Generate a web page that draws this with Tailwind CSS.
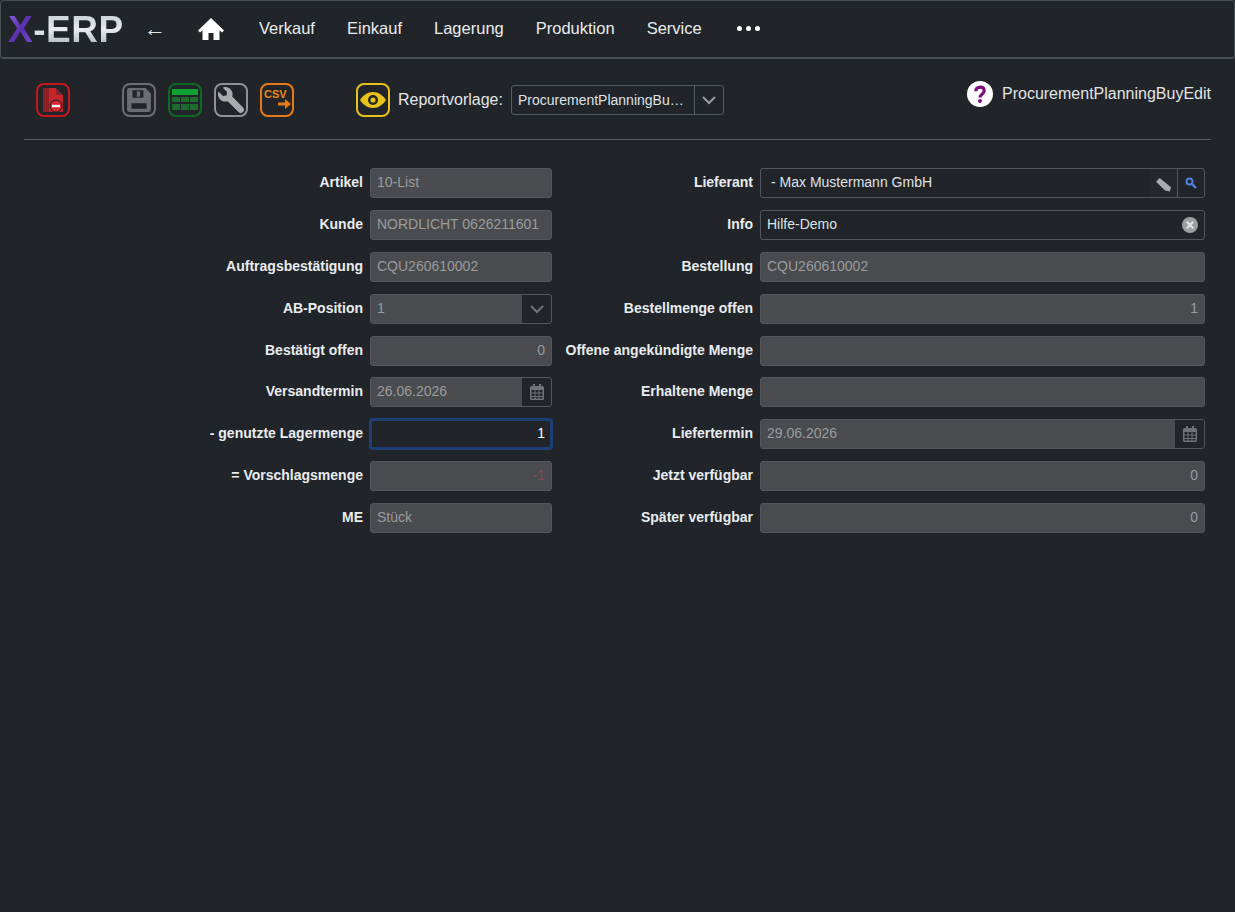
<!DOCTYPE html>
<html lang="de">
<head>
  <meta charset="UTF-8">
  <title>ProcurementPlanningBuyEdit</title>
  <script src="https://cdn.jsdelivr.net/npm/@tailwindcss/browser@4"></script>
</head>
<body class="h-[912px] overflow-hidden bg-[#212529] font-['Liberation_Sans',Arial,sans-serif] text-[14px] text-[#dee2e6]">
  <!-- Navigation -->
  <nav class="flex h-[59px] items-center rounded-[4px] border border-b-2 border-[#4a4e55] pl-[7px]">
    <span class="flex w-[116px] text-[37px] font-bold leading-none tracking-[0.5px]">
      <span class="bg-gradient-to-br from-[#8a63d8] via-[#5a2fb0] to-[#7a4fd0] bg-clip-text text-transparent">X</span>
      <span class="bg-gradient-to-b from-[#c4cbd1] via-[#e8ebee] to-[#a9b1b8] bg-clip-text text-transparent">-ERP</span>
    </span>
    <span class="ml-[20px] w-[20px] text-[22px] leading-none text-[#e6e6e6]">←</span>
    <svg class="ml-[34px]" width="26" height="22" viewBox="0 0 26 22" fill="#fff"><path d="M13 0 26 12.500 24 14.500 21.500 12.300V22H15.500V15H10.500V22H4.500V12.300L2 14.500 0 12.500Z"/></svg>
    <div class="ml-[19px] -mt-[2px] flex items-center text-[16.5px] text-[#e9ecef]">
      <a class="px-4">Verkauf</a>
      <a class="px-4">Einkauf</a>
      <a class="px-4">Lagerung</a>
      <a class="px-4">Produktion</a>
      <a class="px-4">Service</a>
      <span class="ml-[19px] flex gap-[4px]">
        <i class="size-[5px] rounded-full bg-white"></i><i class="size-[5px] rounded-full bg-white"></i><i class="size-[5px] rounded-full bg-white"></i>
      </span>
    </div>
  </nav>

  <!-- Toolbar -->
  <div class="mx-[24px] flex h-[81px] items-start border-b border-[#5a5d62] pt-[24px]">
    <div class="ml-[12px] flex size-[34px] items-center justify-center rounded-lg border-2 border-[#c8161d]">
      <svg width="22" height="25" viewBox="0 0 22 25"><path fill="#8e2025" d="M1 0H7V24H1Z"/><path fill="#c8242b" d="M7 0H14L21 7V24H7Z"/><path fill="#212529" d="M14 0V7H21Z" opacity=".4"/><circle cx="14" cy="18" r="6.500" fill="#212529"/><circle cx="14" cy="18" r="5.500" fill="#d8262d"/><rect x="10" y="16.800" width="8" height="2.400" fill="#fff"/></svg>
    </div>
    <div class="ml-[52px] flex size-[34px] items-center justify-center rounded-lg border-2 border-[#6b6d70]">
      <svg width="26" height="26" viewBox="0 0 24 24"><path fill="#6b6d70" d="M1 3a2 2 0 0 1 2-2h15l5 5v15a2 2 0 0 1-2 2H3a2 2 0 0 1-2-2Z"/><path fill="#212529" d="M6 3h10v7H6ZM5 15h14v5H5Z"/><path fill="#6b6d70" d="M10 4h3v5h-3Z"/></svg>
    </div>
    <div class="ml-[12px] flex size-[34px] items-center justify-center rounded-lg border-2 border-[#0f6b24]">
      <svg width="26" height="24" viewBox="0 0 26 24"><path fill="#12a22f" d="M0 1H26V7H0Z"/><path fill="#1e6b30" d="M0 9H8V14H0ZM9 9H17V14H9ZM18 9H26V14H18ZM0 16H8V22H0ZM9 16H17V22H9ZM18 16H26V22H18Z"/></svg>
    </div>
    <div class="ml-[12px] flex size-[34px] items-center justify-center rounded-lg border-2 border-[#8f9295]">
      <svg width="26" height="26" viewBox="0 0 512 512"><path fill="#a9abad" transform="matrix(-1 0 0 1 512 0)" d="M507.730 109.100c-2.240-9.030-13.540-12.090-20.120-5.510l-74.360 74.360-67.880-11.310-11.310-67.880 74.360-74.360c6.620-6.620 3.430-17.900-5.660-20.160-47.380-11.740-99.550.91-136.580 37.930-39.640 39.640-50.550 97.100-34.050 147.200L18.740 402.760c-24.990 24.990-24.990 65.510 0 90.500 24.990 24.990 65.510 24.990 90.500 0l213.210-213.210c50.120 16.710 107.470 5.680 147.370-34.220 37.070-37.070 49.700-89.320 37.910-136.730z"/></svg>
    </div>
    <div class="ml-[12px] relative size-[34px] rounded-lg border-2 border-[#e8791a]">
      <span class="absolute left-[2px] top-[4px] text-[11px] font-bold leading-none text-[#e8891a]">CSV</span>
      <svg class="absolute left-[16px] top-[14px]" width="13" height="10" viewBox="0 0 13 10"><path fill="#e8791a" d="M0 3.500H7V0L13 5 7 10V6.500H0Z"/></svg>
    </div>
    <div class="ml-[62px] flex size-[34px] items-center justify-center rounded-lg border-2 border-[#e8c21a]">
      <svg width="26" height="16" viewBox="0 0 26 16"><path fill="#e8c21a" d="M13 0C7.500 0 3 3.500 0 8c3 4.500 7.500 8 13 8s10-3.500 13-8c-3-4.500-7.500-8-13-8Z"/><circle cx="13" cy="8" r="5" fill="#212529"/><circle cx="13" cy="8" r="2.600" fill="#e8c21a"/></svg>
    </div>
    <label class="ml-[8px] mt-[7px] text-[16px] leading-[20px] text-[#e2e4e6]">Reportvorlage:</label>
    <div class="ml-[8px] mt-[2px] flex h-[30px] w-[213px] items-center rounded-[3px] border border-[#565b62]">
      <span class="w-[182px] whitespace-nowrap pl-[6px] text-[#dee2e6]">ProcurementPlanningBu…</span>
      <span class="flex h-full flex-1 items-center justify-center border-l border-[#565b62]">
        <svg width="16" height="10" viewBox="0 0 16 10" fill="none" stroke="#9a9da0" stroke-width="2"><path d="M2 2 8 8 14 2"/></svg>
      </span>
    </div>
    <div class="ml-auto flex items-center">
      <svg width="26" height="26" viewBox="0 0 26 26" class="-mt-[2px]"><circle cx="13" cy="13" r="13" fill="#fff"/><path fill="none" stroke="#7b0f7e" stroke-width="3.200" d="M8.800 10.200c0-2.500 1.800-4.100 4.300-4.100s4.100 1.500 4.100 3.700c0 3.500-4.200 3.400-4.200 6.600"/><circle cx="13" cy="20" r="2" fill="#7b0f7e"/></svg>
      <span class="ml-[9px] -mt-[2px] text-[16px] text-[#e2e4e6]">ProcurementPlanningBuyEdit</span>
    </div>
  </div>

  <!-- Form -->
  <form class="ml-[24px] mt-[28px] grid w-[1181px] grid-cols-[339px_182px_194px_445px] gap-x-[7px] gap-y-[11.9px] [&>input]:pb-[2px] [&>label]:text-right [&>label]:font-bold [&>label]:leading-[28px] [&>label]:text-[#e9ecef]">
    <label>Artikel</label>
    <input disabled value="10-List" class="h-[30px] rounded-[3px] border border-[#53565a] bg-[#494b4e] px-[6px] text-[#9a9c9e]">
    <label>Lieferant</label>
    <div class="flex h-[30px] items-center rounded-[3px] border border-[#53575d]">
      <span class="flex-1 pb-[1px] pl-[10px]">- Max Mustermann GmbH</span>
      <span class="flex h-full w-[27px] items-center justify-center bg-[#24282d]">
        <svg class="mt-[2px]" width="15" height="15" viewBox="0 0 14 14"><path fill="#a9abad" d="M3.500 1 14 9.500 13 13.500 8.500 12.500 0 4.500Z"/></svg>
      </span>
      <span class="flex h-full w-[27px] items-center justify-center border-l border-[#53575d]">
        <svg width="12" height="12" viewBox="0 0 12 12" fill="none" stroke="#4f7fe0"><circle cx="4.500" cy="4.500" r="3" stroke-width="2"/><path stroke-width="2.400" d="M7 7l4 4"/></svg>
      </span>
    </div>

    <label>Kunde</label>
    <input disabled value="NORDLICHT 0626211601" class="h-[30px] rounded-[3px] border border-[#53565a] bg-[#494b4e] px-[6px] text-[#9a9c9e]">
    <label>Info</label>
    <div class="flex h-[30px] items-center rounded-[3px] border border-[#53575d] pl-[6px] pr-[6px]">
      <span class="flex-1 pb-[1px]">Hilfe-Demo</span>
      <svg width="16" height="16" viewBox="0 0 16 16"><circle cx="8" cy="8" r="8" fill="#9c9ea0"/><path stroke="#e3e4e5" stroke-width="2" d="M4.800 4.800l6.400 6.400M11.200 4.800l-6.400 6.400"/></svg>
    </div>

    <label>Auftragsbestätigung</label>
    <input disabled value="CQU260610002" class="h-[30px] rounded-[3px] border border-[#53565a] bg-[#494b4e] px-[6px] text-[#9a9c9e]">
    <label>Bestellung</label>
    <input disabled value="CQU260610002" class="h-[30px] rounded-[3px] border border-[#53565a] bg-[#494b4e] px-[6px] text-[#9a9c9e]">

    <label>AB-Position</label>
    <div class="flex h-[30px] items-center rounded-[3px] border border-[#53565a]">
      <span class="flex h-full flex-1 items-center bg-[#494b4e] px-[6px] pb-[1px] text-[#9a9c9e]">1</span>
      <span class="flex h-full w-[29px] items-center justify-center">
        <svg width="16" height="10" viewBox="0 0 16 10" fill="none" stroke="#6f7276" stroke-width="2"><path d="M2 2 8 8 14 2"/></svg>
      </span>
    </div>
    <label>Bestellmenge offen</label>
    <input disabled value="1" class="h-[30px] rounded-[3px] border border-[#53565a] bg-[#494b4e] px-[6px] text-right text-[#9a9c9e]">

    <label>Bestätigt offen</label>
    <input disabled value="0" class="h-[30px] rounded-[3px] border border-[#53565a] bg-[#494b4e] px-[6px] text-right text-[#9a9c9e]">
    <label>Offene angekündigte Menge</label>
    <input disabled class="h-[30px] rounded-[3px] border border-[#53565a] bg-[#494b4e] px-[6px]">

    <label>Versandtermin</label>
    <div class="flex h-[30px] items-center rounded-[3px] border border-[#53565a]">
      <span class="flex h-full flex-1 items-center bg-[#494b4e] px-[6px] pb-[1px] text-[#9a9c9e]">26.06.2026</span>
      <span class="flex h-full w-[29px] items-center justify-center">
        <svg width="14" height="16" viewBox="0 0 14 16"><path fill="#6f7276" d="M3 0h2v2h4V0h2v2h1.500A1.500 1.500 0 0 1 14 3.500v11a1.500 1.500 0 0 1-1.500 1.500h-11A1.500 1.500 0 0 1 0 14.500v-11A1.500 1.500 0 0 1 1.500 2H3Z"/><path fill="#212529" d="M1.500 6h3v2.500h-3ZM5.500 6h3v2.500h-3ZM9.500 6h3v2.500h-3ZM1.500 9.500h3V12h-3ZM5.500 9.500h3V12h-3ZM9.500 9.500h3V12h-3ZM1.500 13h3v1.500h-3ZM5.500 13h3v1.500h-3ZM9.500 13h3v1.500h-3Z"/></svg>
      </span>
    </div>
    <label>Erhaltene Menge</label>
    <input disabled class="h-[30px] rounded-[3px] border border-[#53565a] bg-[#494b4e] px-[6px]">

    <label>- genutzte Lagermenge</label>
    <input value="1" class="h-[30px] rounded-[3px] border-2 border-[#1d3f75] bg-[#212529] px-[5px] text-right text-white outline-none ring-1 ring-[#1d3f75]">
    <label>Liefertermin</label>
    <div class="flex h-[30px] items-center rounded-[3px] border border-[#53565a]">
      <span class="flex h-full flex-1 items-center bg-[#494b4e] px-[6px] pb-[1px] text-[#9a9c9e]">29.06.2026</span>
      <span class="flex h-full w-[29px] items-center justify-center">
        <svg width="14" height="16" viewBox="0 0 14 16"><path fill="#6f7276" d="M3 0h2v2h4V0h2v2h1.500A1.500 1.500 0 0 1 14 3.500v11a1.500 1.500 0 0 1-1.500 1.500h-11A1.500 1.500 0 0 1 0 14.500v-11A1.500 1.500 0 0 1 1.500 2H3Z"/><path fill="#212529" d="M1.500 6h3v2.500h-3ZM5.500 6h3v2.500h-3ZM9.500 6h3v2.500h-3ZM1.500 9.500h3V12h-3ZM5.500 9.500h3V12h-3ZM9.500 9.500h3V12h-3ZM1.500 13h3v1.500h-3ZM5.500 13h3v1.500h-3ZM9.500 13h3v1.500h-3Z"/></svg>
      </span>
    </div>

    <label>= Vorschlagsmenge</label>
    <input disabled value="-1" class="h-[30px] rounded-[3px] border border-[#53565a] bg-[#494b4e] px-[6px] text-right text-[#8a4a52]">
    <label>Jetzt verfügbar</label>
    <input disabled value="0" class="h-[30px] rounded-[3px] border border-[#53565a] bg-[#494b4e] px-[6px] text-right text-[#9a9c9e]">

    <label>ME</label>
    <input disabled value="Stück" class="h-[30px] rounded-[3px] border border-[#53565a] bg-[#494b4e] px-[6px] text-[#9a9c9e]">
    <label>Später verfügbar</label>
    <input disabled value="0" class="h-[30px] rounded-[3px] border border-[#53565a] bg-[#494b4e] px-[6px] text-right text-[#9a9c9e]">
  </form>
</body>
</html>
